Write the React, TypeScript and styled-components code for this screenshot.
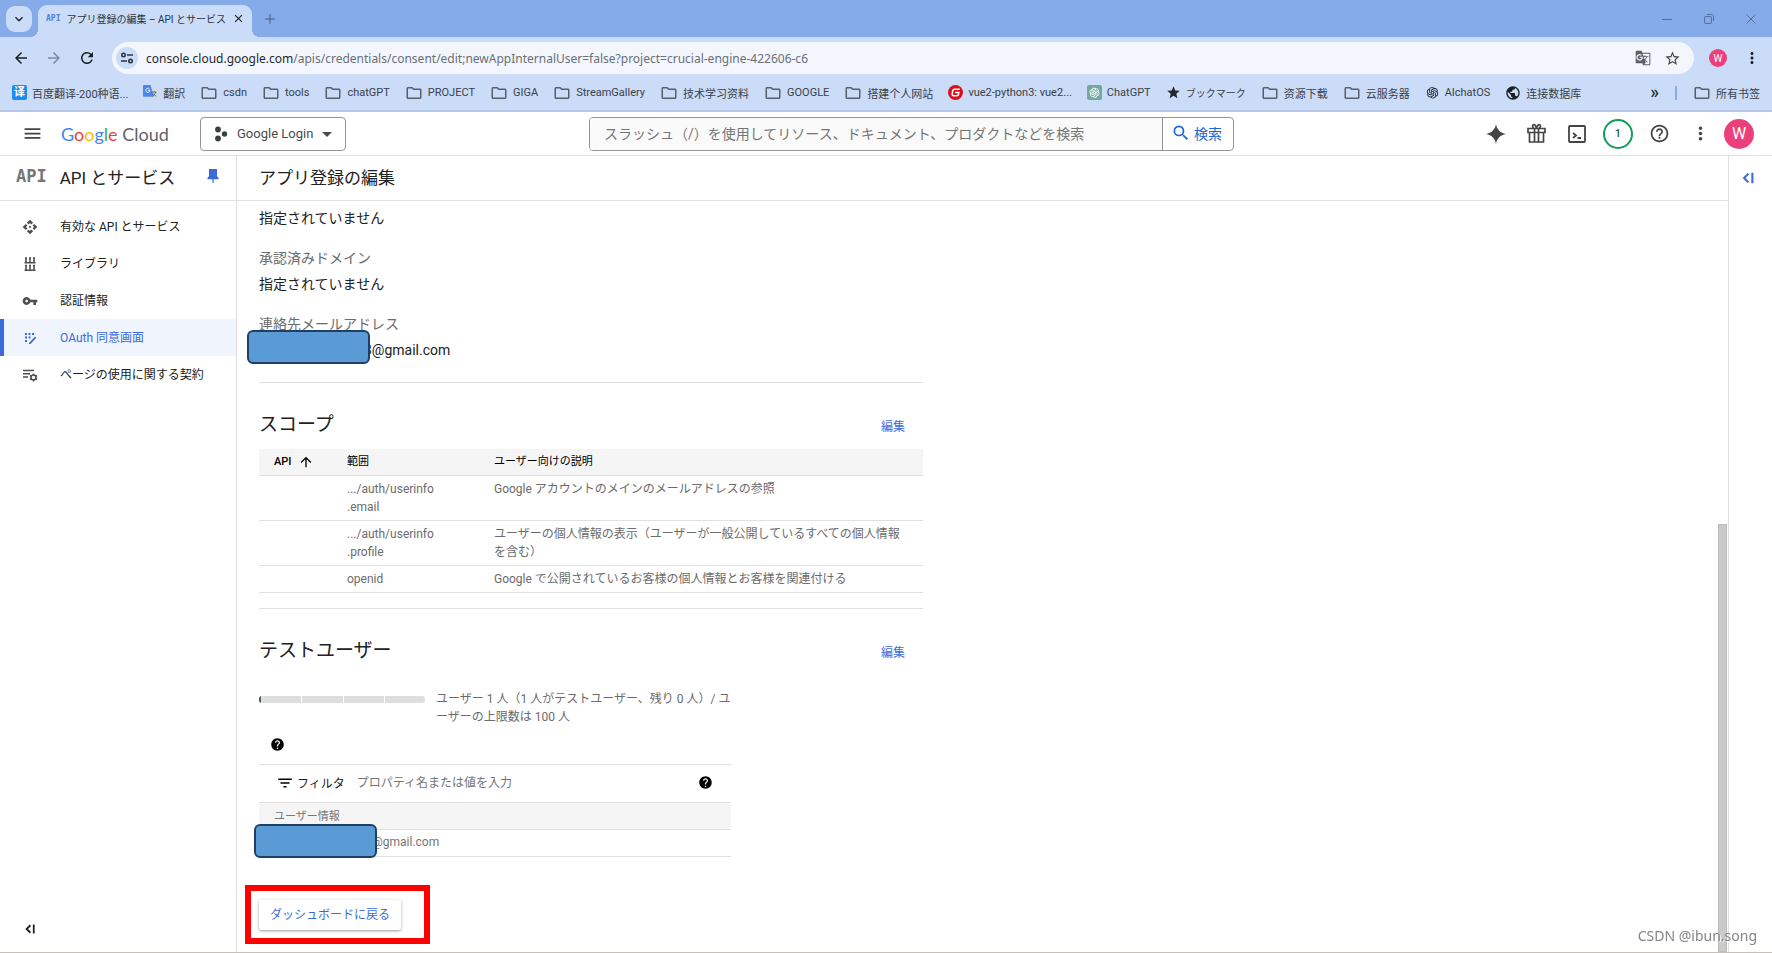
import React from "react";
import styled, { createGlobalStyle, css } from "styled-components";
import {
  MdApi,
  MdArrowBack,
  MdArrowDropDown,
  MdArrowForward,
  MdArrowUpward,
  MdClose,
  MdFilterList,
  MdGTranslate,
  MdHelp,
  MdHelpOutline,
  MdKeyboardArrowDown,
  MdMenu,
  MdMoreVert,
  MdOutlineFolder,
  MdVpnKey,
  MdPublic,
  MdRefresh,
  MdSearch,
  MdStar,
  MdStarBorder,
  MdAdd,
} from "react-icons/md";
import { AiOutlineOpenAI } from "react-icons/ai";

const blue = "#3b6bdb";
const line = "#e0e0e0";
const ink = "#212121";
const muted = "#6b6b6b";

const GlobalStyle = createGlobalStyle`
  *, *::before, *::after { box-sizing: border-box; }
  body {
    margin: 0;
    background: #fff;
    color: ${ink};
    font-family: Roboto, "Noto Sans CJK JP", sans-serif;
    font-size: 12px;
  }
  button, input {
    font: inherit;
    color: inherit;
    background: none;
    border: 0;
    padding: 0;
    margin: 0;
  }
  a { color: inherit; text-decoration: none; }
  h1, h2, p, ul, dl, dd { margin: 0; padding: 0; font-weight: 400; }
  ul { list-style: none; }
  svg { display: block; flex: none; }
`;

const Page = styled.div`
  min-height: 100vh;
  display: flex;
  flex-direction: column;
  border-bottom: 1px solid #c6bfb8;
`;

/* Browser window */

const TabStrip = styled.div`
  display: flex;
  align-items: center;
  height: 37px;
  padding: 0 10px 0 6px;
  background: #85ace9;
`;

const TabSearch = styled.button`
  display: grid;
  place-items: center;
  width: 26px;
  height: 26px;
  border-radius: 9px;
  background: #cadcf7;
`;

const Tab = styled.div`
  position: relative;
  align-self: flex-end;
  display: flex;
  align-items: center;
  gap: 6px;
  width: 214px;
  height: 32px;
  margin-left: 6px;
  padding: 0 8px 5px 8px;
  border-radius: 9px 9px 0 0;
  background: #cadcf7;

  &::before, &::after {
    content: "";
    position: absolute;
    bottom: 0;
    width: 8px;
    height: 8px;
  }
  &::before {
    left: -8px;
    background: radial-gradient(circle at 0 0, transparent 8px, #cadcf7 8px);
  }
  &::after {
    right: -8px;
    background: radial-gradient(circle at 100% 0, transparent 8px, #cadcf7 8px);
  }
`;

const PixelMark = styled.span<{ $large?: boolean }>`
  flex: none;
  font-family: "DejaVu Sans Mono", monospace;
  font-weight: 700;
  font-size: ${(p) => (p.$large ? 17 : 8)}px;
  color: ${(p) => (p.$large ? "#757575" : "#4f7fe0")};
`;

const TabTitle = styled.span`
  flex: 1;
  white-space: nowrap;
  font-size: 10px;
  color: #2b3340;
`;

const PlainButton = styled.button<{ $color?: string }>`
  display: grid;
  place-items: center;
  color: ${(p) => p.$color ?? "#444"};
`;

const NewTab = styled(PlainButton)`
  margin-left: 10px;
`;

const WindowControls = styled.div`
  display: flex;
  gap: 28px;
  margin-left: auto;
  padding-right: 4px;
`;

const Toolbar = styled.div`
  display: flex;
  align-items: center;
  height: 42px;
  padding: 0 11px 0 12px;
  background: #cadcf7;
`;

const NavButtons = styled.div`
  display: flex;
  gap: 15px;
  margin-right: 16px;
`;

const Omnibox = styled.div`
  flex: 1;
  display: flex;
  align-items: center;
  gap: 8px;
  height: 32px;
  padding: 0 13px 0 4px;
  border-radius: 16px;
  background: #f3f7fd;
`;

const SiteInfo = styled.button`
  display: grid;
  place-items: center;
  width: 22px;
  height: 22px;
  border-radius: 50%;
  background: #cadcf7;
`;

const Url = styled.div`
  flex: 1;
  font-family: "Noto Sans", sans-serif;
  font-size: 12px;
  color: #6a6f76;
  b { font-weight: 400; color: #24282e; }
`;

const OmniIcons = styled.div`
  display: flex;
  gap: 13px;
`;

const Avatar = styled.button<{ $size: number }>`
  display: grid;
  place-items: center;
  width: ${(p) => p.$size}px;
  height: ${(p) => p.$size}px;
  border-radius: 50%;
  background: #ec407a;
  color: #fff;
  font-size: ${(p) => (p.$size > 20 ? 16 : 10)}px;
`;

const ToolbarEnd = styled.div`
  display: flex;
  align-items: center;
  gap: 16px;
  margin-left: 15px;
`;

const BookmarkBar = styled.nav`
  display: flex;
  align-items: center;
  justify-content: space-between;
  height: 33px;
  padding: 0 12px 4px 12px;
  border-bottom: 2px solid #b6c8e6;
  background: #cadcf7;
  font-family: Roboto, "Noto Sans CJK SC", sans-serif;
  font-size: 11px;
  color: #3a4049;
`;

const BookmarkList = styled.ul`
  display: flex;
  align-items: center;
  gap: 15px;
`;

const Bookmark = styled.a<{ $small?: boolean }>`
  display: flex;
  align-items: center;
  gap: 5px;
  font-size: ${(p) => (p.$small ? 10 : 11)}px;
  white-space: nowrap;
`;

const IconSlot = styled.span<{ $bg?: string }>`
  display: grid;
  place-items: center;
  width: 15px;
  height: 15px;
  border-radius: 2px;
  background: ${(p) => p.$bg ?? "transparent"};
  color: #fff;
  font-size: 11px;
  font-weight: 700;
  line-height: 1;
`;

const AllBookmarks = styled.div`
  display: flex;
  align-items: center;
  gap: 16px;
`;

const More = styled.button`
  font-size: 18px;
  font-weight: 500;
  line-height: 16px;
  padding-bottom: 2px;
  color: #24282e;
`;

const Divider = styled.span`
  width: 2px;
  height: 14px;
  background: #85ace9;
`;

/* Cloud console header */

const CloudHeader = styled.header`
  display: flex;
  align-items: center;
  height: 44px;
  padding: 0 18px 0 22px;
  border-bottom: 1px solid ${line};
`;

const HeaderStart = styled.div`
  flex: 0 0 567px;
  display: flex;
  align-items: center;
`;

const Logo = styled.a`
  margin-left: 18px;
  width: 121px;
  font-family: Lato, sans-serif;
  font-size: 18px;
  line-height: 24px;
  white-space: nowrap;
  color: #5f6368;
`;

const LogoLetter = styled.span<{ $color: string }>`
  color: ${(p) => p.$color};
`;

const ProjectPicker = styled.button`
  display: flex;
  align-items: center;
  gap: 2px;
  height: 34px;
  margin-left: 18px;
  padding: 0 6px 0 12px;
  border: 1px solid #949494;
  border-radius: 4px;
  color: #4a4a4a;
  font-size: 13px;
`;

const ProjectName = styled.span`
  margin-left: 6px;
`;

const SearchForm = styled.form`
  flex: 0 1 645px;
  display: flex;
  height: 34px;
  border: 1px solid #949494;
  border-radius: 4px;
  overflow: hidden;
`;

const SearchInput = styled.input`
  flex: 1;
  min-width: 0;
  padding: 0 14px;
  background: #fafafa;
  font-size: 14px;
  &::placeholder { color: #757575; opacity: 1; }
`;

const SearchButton = styled.button`
  display: flex;
  align-items: center;
  gap: 3px;
  width: 71px;
  padding: 0 0 2px 8px;
  border-left: 1px solid #949494;
  color: #1a66d6;
  font-size: 14px;
`;

const HeaderTools = styled.div`
  display: flex;
  align-items: center;
  gap: 20px;
  margin-left: auto;
  color: #444;
`;

const Notice = styled.button`
  width: 30px;
  height: 30px;
  margin: 0 -4px;
  border: 2px solid #109d58;
  border-radius: 50%;
  font-size: 11px;
  font-weight: 500;
  color: #145c38;
`;

const AccountSlot = styled.div`
  margin-left: -7px;
`;

/* Console body */

const Body = styled.div`
  flex: 1;
  display: flex;
`;

const Sidebar = styled.aside`
  flex: 0 0 237px;
  display: flex;
  flex-direction: column;
  border-right: 1px solid ${line};
`;

const bar = css`
  display: flex;
  align-items: center;
  height: 45px;
  padding-bottom: 4px;
  border-bottom: 1px solid ${line};
`;

const SidebarTitle = styled.div`
  ${bar}
  padding-left: 16px;
  padding-right: 15px;
  h2 { flex: 1; margin-left: 13px; font-size: 17px; }
`;

const NavList = styled.ul`
  padding-top: 7px;
`;

const NavLink = styled.a<{ $active?: boolean }>`
  display: flex;
  align-items: center;
  gap: 22px;
  height: 37px;
  padding-left: ${(p) => (p.$active ? 18 : 22)}px;
  border-left: ${(p) => (p.$active ? `4px solid ${blue}` : "0")};
  background: ${(p) => (p.$active ? "#eff4fd" : "transparent")};
  color: ${(p) => (p.$active ? blue : ink)};
  svg { color: ${(p) => (p.$active ? blue : "#4f4f4f")}; }
  span { padding-bottom: 3px; }
`;

const CollapseMenu = styled(PlainButton)`
  margin: auto 0 17px 22px;
  width: 16px;
`;

const Main = styled.main`
  flex: 1;
  min-width: 0;
  display: flex;
  flex-direction: column;
`;

const PageTitle = styled.div`
  ${bar}
  padding-left: 22px;
  h1 { font-size: 17px; }
`;

const Scroller = styled.div`
  flex: 1;
  display: flex;
  justify-content: space-between;
`;

const Track = styled.div`
  flex: 0 0 10px;
  display: flex;
  align-items: flex-end;
`;

const Thumb = styled.div`
  width: 9px;
  height: 57%;
  background: #cacaca;
  border: 1px solid #bcbcbc;
`;

const Content = styled.div`
  width: 100%;
  max-width: 686px;
  padding: 7px 0 8px 22px;
`;

const Details = styled.dl`
  padding-bottom: 22px;
  font-size: 14px;
  line-height: 20px;
  dt { color: ${muted}; margin-top: 20px; }
  dt + dd { margin-top: 6px; }
`;

const Masked = styled.span`
  position: relative;
  display: block;
`;

const Redaction = styled.span<{ $x: number; $y: number }>`
  position: absolute;
  left: ${(p) => p.$x}px;
  top: ${(p) => p.$y}px;
  width: 123px;
  height: 34px;
  border: 2px solid #1f4062;
  border-radius: 6px;
  background: #5b9bd5;
`;

const MaskedTail = styled.span<{ $indent: number }>`
  padding-left: ${(p) => p.$indent}px;
`;

const Section = styled.section`
  border-top: 1px solid ${line};
  padding-top: 28px;
`;

const SectionHead = styled.div`
  display: flex;
  justify-content: space-between;
  align-items: center;
  padding-right: 18px;
  h2 { font-size: 19px; line-height: 28px; }
`;

const TextLink = styled.a`
  color: ${blue};
`;

const ScopeTable = styled.table`
  width: 100%;
  margin: 10px 0 15px;
  border-collapse: collapse;
  table-layout: fixed;
  line-height: 18px;
  color: ${muted};

  th, td {
    padding: 4px 15px;
    border-bottom: 1px solid ${line};
    text-align: left;
    vertical-align: top;
  }
  th {
    background: #f5f5f5;
    color: #000;
    font-size: 11px;
    font-weight: 400;
  }
  th:nth-child(1) { width: 73px; }
  th:nth-child(2) { width: 147px; }
`;

const Sorted = styled.span`
  display: flex;
  align-items: center;
  gap: 7px;
  font-weight: 500;
`;

const Users = styled.div`
  max-width: 472px;
`;

const Quota = styled.div`
  display: flex;
  gap: 11px;
  margin-top: 25px;
  line-height: 18px;
  color: ${muted};
  p { flex: 1; margin-right: -6px; line-break: anywhere; }
`;

const Meter = styled.div`
  flex: 0 0 166px;
  display: flex;
  gap: 1px;
  height: 7px;
  margin-top: 6px;
  border-radius: 3px;
  overflow: hidden;
`;

const MeterPart = styled.span<{ $used?: boolean }>`
  flex: 1;
  background: #dedede;
  border-left: ${(p) => (p.$used ? "2px solid #455a64" : "0")};
`;

const HelpRow = styled.div`
  padding: 11px 0 12px 11px;
`;

const FilterRow = styled.div`
  display: flex;
  align-items: center;
  height: 38px;
  padding: 0 18px 2px 17px;
  border-top: 1px solid ${line};
  label { margin-left: 3px; }
  input { flex: 1; margin-left: 12px; }
  input::placeholder { color: #757575; opacity: 1; }
`;

const UserTable = styled.table`
  width: 100%;
  border-collapse: collapse;
  border-top: 1px solid ${line};
  color: #757575;
  th, td {
    height: 27px;
    padding: 0 15px 3px;
    border-bottom: 1px solid ${line};
    text-align: left;
  }
  th { background: #f5f5f5; font-size: 11px; font-weight: 400; }
`;

const Highlight = styled.div`
  width: 185px;
  margin: 28px 0 0 -14px;
  padding: 9px 8px 8px;
  border: 6px solid #f00;
`;

const BackButton = styled.button`
  display: block;
  height: 30px;
  padding: 0 11px 3px;
  border-radius: 2px;
  background: #fff;
  box-shadow: 0 1px 3px rgba(0, 0, 0, 0.4);
  color: ${blue};
  white-space: nowrap;
`;

const Rail = styled.aside`
  flex: 0 0 44px;
  border-left: 1px solid ${line};
  padding: 15px 0 0 12px;
`;

const Watermark = styled.div`
  position: fixed;
  right: 15px;
  bottom: 8px;
  font-family: "Noto Sans", sans-serif;
  font-size: 14px;
  line-height: 18px;
  color: #858585;
  text-shadow: 1px 1px 1px #fff;
`;

/* Drawings */

const CollapseIcon = ({ size = 16 }: { size?: number }) => (
  <svg width={size} height={size} viewBox="0 0 16 16" fill="none" stroke="currentColor" strokeWidth="2.400">
    <path d="M8.500 3 3.500 8l5 5M13 2v12" />
  </svg>
);

const PinIcon = () => (
  <svg width="16" height="16" viewBox="0 0 16 16" fill="currentColor">
    <path d="M4 1h8v7l1.500 2v1.200H8.600V15H7.400v-3.800H2.500V10L4 8z" />
  </svg>
);

const LibraryIcon = () => (
  <svg width="16" height="16" viewBox="0 0 16 16" fill="none" stroke="currentColor" strokeWidth="1.6">
    <path d="M4 1.500v5M8 1.500v5M12 1.500v5M2.500 6.800h11M4 9v5M8 9v5M12 9v5M2.500 14.300h11M3 2h2M7 2h2M11 2h2M3 9.500h2M7 9.500h2M11 9.500h2" />
  </svg>
);

const ConsentIcon = () => (
  <svg width="16" height="16" viewBox="0 0 16 16" fill="currentColor">
    <path d="M3 3h2v2H3zM6.500 3h2v2h-2zM10 3h2v2h-2zM3 6.500h2v2H3zM6.500 6.500h2v2h-2zM3 10h2v2H3z" />
    <path d="m7 13 6-6.500 1.300 1.200L8.500 14H7z" />
  </svg>
);

const AgreementIcon = () => (
  <svg width="16" height="16" viewBox="0 0 16 16" fill="none" stroke="currentColor" strokeWidth="1.500">
    <path d="M1 3.500h11M1 6.800h7M1 10h5" />
    <circle cx="11.500" cy="10.500" r="2.500" />
    <path d="M11.500 6.500v1.500M11.500 13v1.500M8 8.500l1.300.8M13.700 11.700l1.300.8M8 12.500l1.300-.8M13.700 9.300l1.300-.8" />
  </svg>
);

const TuneIcon = () => (
  <svg width="14" height="14" viewBox="0 0 14 14" fill="none" stroke="#2b3340" strokeWidth="1.600">
    <circle cx="3.500" cy="4" r="1.700" />
    <path d="M7 4h6M1 10h6" />
    <circle cx="10.500" cy="10" r="1.700" />
  </svg>
);

const ProjectIcon = () => (
  <svg width="16" height="16" viewBox="0 0 16 16" fill="#3c4043">
    <circle cx="5" cy="3.500" r="2.900" />
    <circle cx="5" cy="12.500" r="2.900" />
    <circle cx="11.500" cy="8" r="2.700" />
  </svg>
);

const SparkIcon = () => (
  <svg width="20" height="20" viewBox="0 0 20 20" fill="currentColor">
    <path d="M10 0c.8 5.500 4.500 9.200 10 10-5.500.8-9.200 4.500-10 10-.8-5.500-4.500-9.200-10-10 5.500-.8 9.200-4.500 10-10z" />
  </svg>
);

const GiftIcon = () => (
  <svg width="21" height="21" viewBox="0 0 21 21" fill="none" stroke="currentColor" strokeWidth="1.700">
    <path d="M2 5.500h17v4H2zM3.500 9.500h14v9.500h-14zM8.500 5.500V19M12.500 5.500V19" />
    <path d="M10.500 5c-1-3-2-3.800-3.200-3.300C6 2.300 6.300 4.300 8 5.300M10.500 5c1-3 2-3.800 3.200-3.300 1.300.6 1 2.600-.7 3.600" />
  </svg>
);

const ShellIcon = () => (
  <svg width="20" height="20" viewBox="0 0 20 20" fill="none" stroke="currentColor" strokeWidth="1.800">
    <rect x="2" y="2" width="16" height="16" rx="1" />
    <path d="m6 9 3 2.500L6 14M10.500 14H14" />
  </svg>
);

const GLogo = () => (
  <svg width="15" height="15" viewBox="0 0 16 16" fill="none">
    <circle cx="8" cy="8" r="8" fill="#d9101c" />
    <path d="M12.500 4.500H7Q5.300 4.500 5 6L4.500 9.500Q4.300 11.500 6 11.500H9.500Q11 11.500 11.200 10L11.500 8H7.500" stroke="#fff" strokeWidth="1.700" />
  </svg>
);

const Minimize = () => (
  <svg width="14" height="14" viewBox="0 0 14 14" stroke="#5a6f95" fill="none"><path d="M2 7.500h10" /></svg>
);
const Restore = () => (
  <svg width="14" height="14" viewBox="0 0 14 14" stroke="#5a6f95" fill="none">
    <rect x="2.500" y="4.500" width="7" height="7" rx="1.500" />
    <path d="M5 2.500h5.500a1.500 1.500 0 0 1 1 1V9" />
  </svg>
);
const CloseWindow = () => (
  <svg width="14" height="14" viewBox="0 0 14 14" stroke="#5a6f95" fill="none"><path d="m2.500 2.500 9 9M11.500 2.500l-9 9" /></svg>
);

const TranslateIcon = () => (
  <svg width="15" height="15" viewBox="0 0 16 16">
    <path d="M7 4h8a1 1 0 0 1 1 1v10a1 1 0 0 1-1 1H9z" fill="#d5d9df" />
    <path d="M1 0h7l3.500 12.500H1a1 1 0 0 1-1-1V1a1 1 0 0 1 1-1z" fill="#4a86e8" />
    <path d="M7.500 5.500H5.500M7.400 5.500A2.200 2.200 0 1 1 6.700 4" stroke="#fff" fill="none" />
    <path d="M9.500 7.500h5M12 6.500v1M13.500 7.500c-.5 2-1.500 3-3 4.500M10.800 9c1 1.500 2 2.400 3.200 3" stroke="#5f6b7a" fill="none" />
  </svg>
);

const Folder = () => <MdOutlineFolder size={18} color="#5b6068" />;

const bookmarks: { label: string; icon: React.ReactNode; small?: boolean }[] = [
  { label: "百度翻译-200种语...", icon: <IconSlot $bg="#1a8cf0">译</IconSlot> },
  { label: "翻訳", icon: <TranslateIcon /> },
  { label: "csdn", icon: <Folder /> },
  { label: "tools", icon: <Folder /> },
  { label: "chatGPT", icon: <Folder /> },
  { label: "PROJECT", icon: <Folder /> },
  { label: "GIGA", icon: <Folder /> },
  { label: "StreamGallery", icon: <Folder /> },
  { label: "技术学习资料", icon: <Folder /> },
  { label: "GOOGLE", icon: <Folder /> },
  { label: "搭建个人网站", icon: <Folder /> },
  { label: "vue2-python3: vue2...", icon: <GLogo /> },
  { label: "ChatGPT", icon: <IconSlot $bg="#74aa9c"><AiOutlineOpenAI size={13} /></IconSlot> },
  { label: "ブックマーク", icon: <MdStar size={15} color="#24282e" />, small: true },
  { label: "资源下载", icon: <Folder /> },
  { label: "云服务器", icon: <Folder /> },
  { label: "AIchatOS", icon: <AiOutlineOpenAI size={15} color="#24282e" /> },
  { label: "连接数据库", icon: <MdPublic size={16} color="#1b1e22" /> },
];

const navItems = [
  { label: "有効な API とサービス", icon: <MdApi size={16} /> },
  { label: "ライブラリ", icon: <LibraryIcon /> },
  { label: "認証情報", icon: <MdVpnKey size={16} /> },
  { label: "OAuth 同意画面", icon: <ConsentIcon />, active: true },
  { label: "ページの使用に関する契約", icon: <AgreementIcon /> },
];

const scopes = [
  { scope: [".../auth/userinfo", ".email"], text: "Google アカウントのメインのメールアドレスの参照" },
  { scope: [".../auth/userinfo", ".profile"], text: "ユーザーの個人情報の表示（ユーザーが一般公開しているすべての個人情報を含む）" },
  { scope: ["openid"], text: "Google で公開されているお客様の個人情報とお客様を関連付ける" },
];

const logoLetters: [string, string][] = [
  ["G", "#4285f4"],
  ["o", "#ea4335"],
  ["o", "#fbbc04"],
  ["g", "#4285f4"],
  ["l", "#34a853"],
  ["e", "#ea4335"],
];

const BrowserChrome = () => (
  <>
    <TabStrip>
      <TabSearch aria-label="タブを検索"><MdKeyboardArrowDown size={16} /></TabSearch>
      <Tab>
        <PixelMark>API</PixelMark>
        <TabTitle>アプリ登録の編集 – API とサービス</TabTitle>
        <PlainButton $color="#1b1e22" aria-label="タブを閉じる"><MdClose size={13} /></PlainButton>
      </Tab>
      <NewTab $color="#5a6f95" aria-label="新しいタブ"><MdAdd size={16} /></NewTab>
      <WindowControls>
        <PlainButton aria-label="最小化"><Minimize /></PlainButton>
        <PlainButton aria-label="元に戻す"><Restore /></PlainButton>
        <PlainButton aria-label="閉じる"><CloseWindow /></PlainButton>
      </WindowControls>
    </TabStrip>
    <Toolbar>
      <NavButtons>
        <PlainButton $color="#1b1e22" aria-label="戻る"><MdArrowBack size={18} /></PlainButton>
        <PlainButton $color="#7d8ba5" aria-label="進む"><MdArrowForward size={18} /></PlainButton>
        <PlainButton $color="#1b1e22" aria-label="再読み込み"><MdRefresh size={18} /></PlainButton>
      </NavButtons>
      <Omnibox>
        <SiteInfo aria-label="サイト情報"><TuneIcon /></SiteInfo>
        <Url>
          <b>console.cloud.google.com</b>
          /apis/credentials/consent/edit;newAppInternalUser=false?project=crucial-engine-422606-c6
        </Url>
        <OmniIcons>
          <PlainButton $color="#5b6068" aria-label="翻訳"><MdGTranslate size={16} /></PlainButton>
          <PlainButton $color="#444" aria-label="ブックマークに追加"><MdStarBorder size={17} /></PlainButton>
        </OmniIcons>
      </Omnibox>
      <ToolbarEnd>
        <Avatar $size={18} aria-label="プロフィール">W</Avatar>
        <PlainButton $color="#1b1e22" aria-label="メニュー"><MdMoreVert size={18} /></PlainButton>
      </ToolbarEnd>
    </Toolbar>
    <BookmarkBar>
      <BookmarkList>
        {bookmarks.map((b) => (
          <li key={b.label}>
            <Bookmark href="#" $small={b.small}>{b.icon}{b.label}</Bookmark>
          </li>
        ))}
      </BookmarkList>
      <AllBookmarks>
        <More>»</More>
        <Divider />
        <Bookmark href="#"><Folder />所有书签</Bookmark>
      </AllBookmarks>
    </BookmarkBar>
  </>
);

export default function App() {
  return (
    <Page>
      <GlobalStyle />
      <BrowserChrome />
      <CloudHeader>
        <HeaderStart>
          <PlainButton aria-label="ナビゲーション メニュー"><MdMenu size={21} /></PlainButton>
          <Logo href="#">
            {logoLetters.map(([letter, color], i) => (
              <LogoLetter key={i} $color={color}>{letter}</LogoLetter>
            ))}{" "}
            Cloud
          </Logo>
          <ProjectPicker>
            <ProjectIcon />
            <ProjectName>Google Login</ProjectName>
            <MdArrowDropDown size={24} />
          </ProjectPicker>
        </HeaderStart>
        <SearchForm>
          <SearchInput
            aria-label="検索"
            placeholder="スラッシュ（/）を使用してリソース、ドキュメント、プロダクトなどを検索"
          />
          <SearchButton type="button"><MdSearch size={20} />検索</SearchButton>
        </SearchForm>
        <HeaderTools>
          <PlainButton aria-label="Gemini"><SparkIcon /></PlainButton>
          <PlainButton aria-label="無料トライアル"><GiftIcon /></PlainButton>
          <PlainButton aria-label="Cloud Shell"><ShellIcon /></PlainButton>
          <Notice>1</Notice>
          <PlainButton aria-label="ヘルプ"><MdHelpOutline size={21} /></PlainButton>
          <PlainButton aria-label="その他"><MdMoreVert size={21} /></PlainButton>
          <AccountSlot><Avatar $size={30} aria-label="アカウント">W</Avatar></AccountSlot>
        </HeaderTools>
      </CloudHeader>
      <Body>
        <Sidebar>
          <SidebarTitle>
            <PixelMark $large>API</PixelMark>
            <h2>API とサービス</h2>
            <PlainButton $color={blue} aria-label="固定"><PinIcon /></PlainButton>
          </SidebarTitle>
          <NavList>
            {navItems.map((n) => (
              <li key={n.label}>
                <NavLink href="#" $active={n.active}>{n.icon}<span>{n.label}</span></NavLink>
              </li>
            ))}
          </NavList>
          <CollapseMenu $color="#212121" aria-label="メニューを折りたたむ"><CollapseIcon size={12} /></CollapseMenu>
        </Sidebar>
        <Main>
          <PageTitle><h1>アプリ登録の編集</h1></PageTitle>
          <Scroller>
            <Content>
              <Details>
                <dd>指定されていません</dd>
                <dt>承認済みドメイン</dt>
                <dd>指定されていません</dd>
                <dt>連絡先メールアドレス</dt>
                <dd>
                  <Masked>
                    <MaskedTail $indent={105}>3@gmail.com</MaskedTail>
                    <Redaction $x={-12} $y={-10} />
                  </Masked>
                </dd>
              </Details>
              <Section>
                <SectionHead>
                  <h2>スコープ</h2>
                  <TextLink href="#">編集</TextLink>
                </SectionHead>
                <ScopeTable>
                  <thead>
                    <tr>
                      <th><Sorted>API <MdArrowUpward size={16} /></Sorted></th>
                      <th>範囲</th>
                      <th>ユーザー向けの説明</th>
                    </tr>
                  </thead>
                  <tbody>
                    {scopes.map((s) => (
                      <tr key={s.text}>
                        <td />
                        <td>
                          {s.scope.map((part) => (
                            <div key={part}>{part}</div>
                          ))}
                        </td>
                        <td>{s.text}</td>
                      </tr>
                    ))}
                  </tbody>
                </ScopeTable>
              </Section>
              <Section>
                <SectionHead>
                  <h2>テストユーザー</h2>
                  <TextLink href="#">編集</TextLink>
                </SectionHead>
                <Users>
                  <Quota>
                    <Meter>
                      <MeterPart $used />
                      <MeterPart />
                      <MeterPart />
                      <MeterPart />
                    </Meter>
                    <p>ユーザー 1 人（1 人がテストユーザー、残り 0 人）/ ユーザーの上限数は 100 人</p>
                  </Quota>
                  <HelpRow><MdHelp size={15} color="#000" /></HelpRow>
                  <FilterRow>
                    <MdFilterList size={18} color="#000" />
                    <label htmlFor="user-filter">フィルタ</label>
                    <input id="user-filter" placeholder="プロパティ名または値を入力" />
                    <MdHelp size={15} color="#000" />
                  </FilterRow>
                  <UserTable>
                    <thead>
                      <tr><th>ユーザー情報</th></tr>
                    </thead>
                    <tbody>
                      <tr>
                        <td>
                          <Masked>
                            <MaskedTail $indent={98}>@gmail.com</MaskedTail>
                            <Redaction $x={-20} $y={-11} />
                          </Masked>
                        </td>
                      </tr>
                    </tbody>
                  </UserTable>
                </Users>
                <Highlight>
                  <BackButton>ダッシュボードに戻る</BackButton>
                </Highlight>
              </Section>
            </Content>
            <Track><Thumb /></Track>
          </Scroller>
        </Main>
        <Rail>
          <PlainButton $color={blue} aria-label="パネルを開く"><CollapseIcon size={14} /></PlainButton>
        </Rail>
      </Body>
      <Watermark>CSDN @ibun.song</Watermark>
    </Page>
  );
}
